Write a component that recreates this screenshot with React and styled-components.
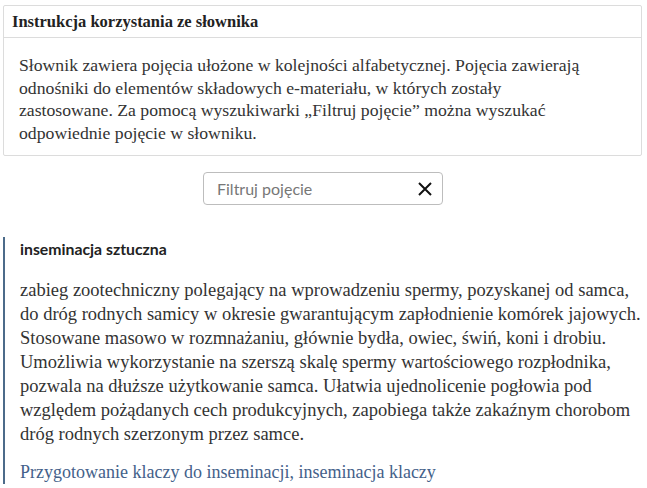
import styled, {createGlobalStyle} from 'styled-components'

const GlobalStyle = createGlobalStyle`
  html, body {
    margin: 0;
    padding: 0;
    background: #fff;
  }
  body {
    font-family: "Liberation Serif", serif;
    color: #333;
  }
`

const App = () => (
  <Page>
    <GlobalStyle />
    <Panel>
      <PanelHeader>Instrukcja korzystania ze słownika</PanelHeader>
      <PanelBody>
        Słownik zawiera pojęcia ułożone w kolejności alfabetycznej. Pojęcia
        zawierają odnośniki do elementów składowych e-materiału, w których
        zostały zastosowane. Za pomocą wyszukiwarki „Filtruj pojęcie” można
        wyszukać odpowiednie pojęcie w słowniku.
      </PanelBody>
    </Panel>

    <SearchRow>
      <SearchBox>
        <SearchInput type="text" placeholder="Filtruj pojęcie" />
        <ClearButton aria-label="Wyczyść">
          <svg width="16" height="16" viewBox="0 0 16 16">
            <path
              d="M2 2 L14 14 M14 2 L2 14"
              stroke="#111"
              strokeWidth="2"
              fill="none"
            />
          </svg>
        </ClearButton>
      </SearchBox>
    </SearchRow>

    <Entry>
      <Term>inseminacja sztuczna</Term>
      <Definition>
        zabieg zootechniczny polegający na wprowadzeniu spermy, pozyskanej od
        samca, do dróg rodnych samicy w okresie gwarantującym zapłodnienie
        komórek jajowych. Stosowane masowo w rozmnażaniu, głównie bydła, owiec,
        świń, koni i drobiu. Umożliwia wykorzystanie na szerszą skalę spermy
        wartościowego rozpłodnika, pozwala na dłuższe użytkowanie samca.
        Ułatwia ujednolicenie pogłowia pod względem pożądanych cech
        produkcyjnych, zapobiega także zakaźnym chorobom dróg rodnych szerzonym
        przez samce.
      </Definition>
      <Links>
        <a href="#klacz">Przygotowanie klaczy do inseminacji</a>,{' '}
        <a href="#inseminacja">inseminacja klaczy</a>
      </Links>
    </Entry>
  </Page>
)

export default App

const Page = styled.div`
  padding: 5px 5px 0 3px;
  height: 488px;
  overflow: hidden;
  box-sizing: border-box;
`

const Panel = styled.section`
  border: 1px solid #dcdcdc;
  border-radius: 2px;
`

const PanelHeader = styled.h2`
  margin: 0;
  height: 31px;
  line-height: 31px;
  padding: 0 8px;
  border-bottom: 1px solid #dcdcdc;
  font-family: "Liberation Serif", serif;
  font-weight: bold;
  font-size: 16.5px;
  color: #222;
`

const PanelBody = styled.p`
  margin: 0;
  padding: 16px 15px 11px 15px;
  font-size: 17.7px;
  line-height: 22.5px;
  color: #333;
  max-width: 578px;
`

const SearchRow = styled.div`
  display: flex;
  justify-content: center;
  padding: 16px 0 0 0;
  margin-left: 1px;
`

const SearchBox = styled.div`
  display: flex;
  align-items: center;
  width: 240px;
  height: 33px;
  border: 1px solid #bdbdbd;
  border-radius: 4px;
  box-sizing: border-box;
`

const SearchInput = styled.input`
  flex: 1;
  min-width: 0;
  border: 0;
  outline: none;
  padding: 0 0 0 13px;
  font-family: Lato, "Noto Sans", sans-serif;
  font-size: 16px;
  color: #333;
  background: transparent;

  &::placeholder {
    color: #777;
  }
`

const ClearButton = styled.button`
  border: 0;
  background: none;
  padding: 0 9px 0 6px;
  display: flex;
  align-items: center;
  cursor: pointer;
`

const Entry = styled.article`
  margin-top: 32px;
  border-left: 2px solid #4c6b8a;
  padding: 2px 0 0 15px;
`

const Term = styled.h3`
  margin: 0;
  font-family: Lato, "Noto Sans", sans-serif;
  font-weight: bold;
  font-size: 15.8px;
  line-height: 20px;
  color: #222;
`

const Definition = styled.p`
  margin: 19px 0 0 0;
  font-size: 18.5px;
  line-height: 24px;
  color: #333;
`

const Links = styled.p`
  margin: 14px 0 0 0;
  font-size: 18px;
  line-height: 24px;
  color: #44618a;

  a {
    color: #44618a;
    text-decoration: none;
  }
`
